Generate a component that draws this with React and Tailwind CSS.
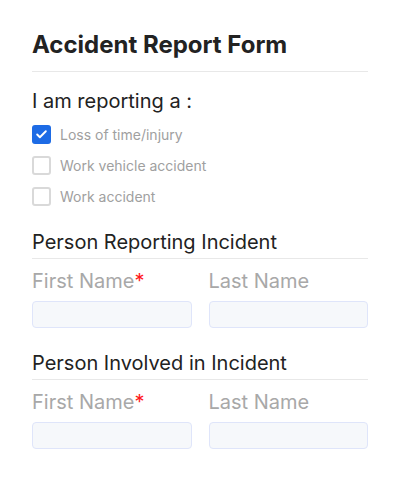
import { Check } from "lucide-react"

const options = [
    { label: "Loss of time/injury", checked: true },
    { label: "Work vehicle accident", checked: false },
    { label: "Work accident", checked: false },
]

function NameFields() {
    return (
        <div className="grid grid-cols-2 gap-x-[17px] mt-[10px]">
            <div>
                <div className="text-[20px] leading-[24px] text-[#a8a8a8]">
                    First Name<span className="text-[#ff1a1a]">*</span>
                </div>
                <div className="mt-[8px] h-[27px] rounded-[4px] border border-[#dfe5fa] bg-[#f6f8fb]" />
            </div>
            <div>
                <div className="text-[20px] leading-[24px] text-[#a8a8a8]">Last Name</div>
                <div className="mt-[8px] h-[27px] rounded-[4px] border border-[#dfe5fa] bg-[#f6f8fb]" />
            </div>
        </div>
    )
}

function Section({ title }) {
    return (
        <div>
            <h3 className="text-[20px] leading-[24px] text-[#222] pb-[4px] border-b border-[#e8e8e8]">{title}</h3>
            <NameFields />
        </div>
    )
}

export default function App() {
    return (
        <div className="w-[400px] h-[480px] bg-white px-[32px] pt-[30px] font-['Inter',sans-serif]">
            <h1 className="text-[24px] leading-[30px] font-bold text-[#222] pb-[11px] border-b border-[#e8e8e8]">
                Accident Report Form
            </h1>
            <p className="mt-[17px] text-[20px] leading-[24px] text-[#222]">I am reporting a :</p>
            <div className="mt-[12px] flex flex-col gap-[12px]">
                {options.map((o, i) => (
                    <label key={i} className="flex items-center gap-[9px]">
                        {o.checked ? (
                            <span className="w-[19px] h-[19px] rounded-[3px] bg-[#1d6be5] flex items-center justify-center">
                                <Check className="w-[13px] h-[13px] text-white" strokeWidth={3.5} />
                            </span>
                        ) : (
                            <span className="w-[19px] h-[19px] rounded-[3px] border-2 border-[#d9d9d9] bg-white" />
                        )}
                        <span className="text-[14px] leading-[19px] text-[#a0a0a0]">{o.label}</span>
                    </label>
                ))}
            </div>
            <div className="mt-[24px]">
                <Section title="Person Reporting Incident" />
            </div>
            <div className="mt-[23px]">
                <Section title="Person Involved in Incident" />
            </div>
        </div>
    )
}
